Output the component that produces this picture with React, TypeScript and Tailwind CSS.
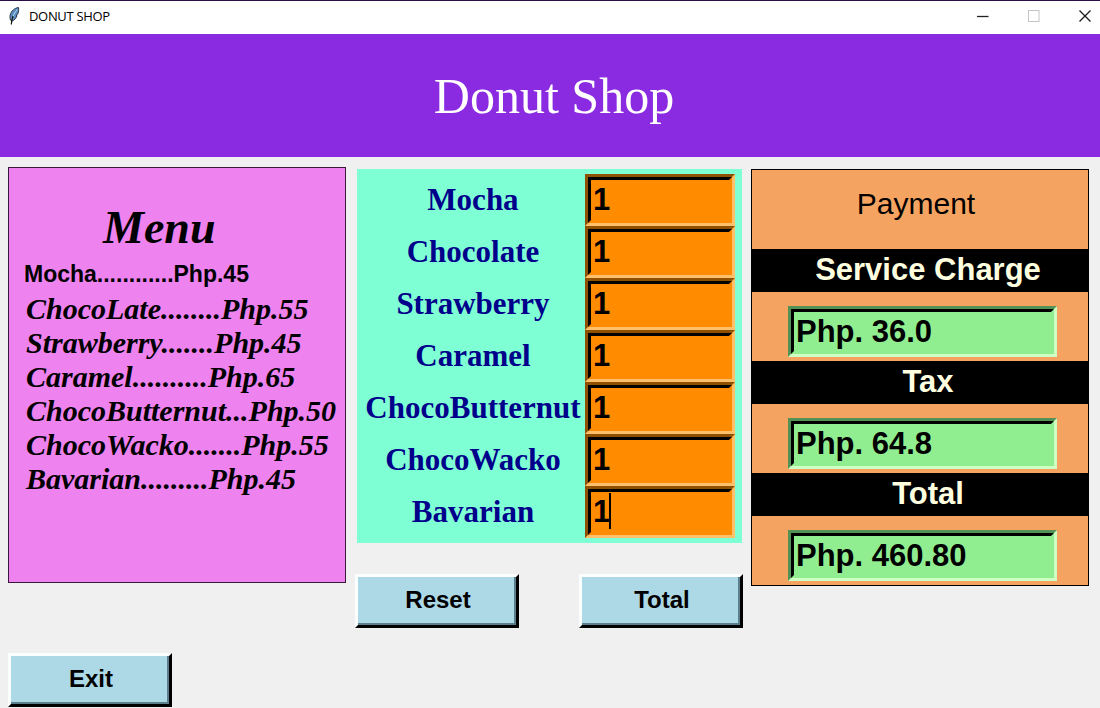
import { useState } from "react";

const menuItems = [
  "ChocoLate........Php.55",
  "Strawberry.......Php.45",
  "Caramel..........Php.65",
  "ChocoButternut...Php.50",
  "ChocoWacko.......Php.55",
  "Bavarian.........Php.45",
];

const donuts = [
  "Mocha",
  "Chocolate",
  "Strawberry",
  "Caramel",
  "ChocoButternut",
  "ChocoWacko",
  "Bavarian",
];

const charges = [
  { name: "Service Charge", value: "Php. 36.0" },
  { name: "Tax", value: "Php. 64.8" },
  { name: "Total", value: "Php. 460.80" },
];

function FeatherIcon() {
  return (
    <svg width="12" height="18" viewBox="0 0 12 18" aria-hidden="true">
      <path
        d="M10.5 .5C7 .8 3 4 2.200 8C1.800 10 2 11.500 2.600 13.200L4 14.200C6.500 13 8.500 11 9 8.500L8.200 8.300L9.800 7C10.600 5 10.900 2.500 10.500 .5Z"
        fill="#5b8cc0"
        stroke="#1d2a3a"
        strokeWidth="0.9"
      />
      <path d="M9.300 2.500C7 5 5 9 3.400 13" fill="none" stroke="#c3dcf2" strokeWidth="0.900" />
      <path d="M5 9C4 11.500 3.500 14 3.300 17.500" fill="none" stroke="#111111" strokeWidth="1.200" />
    </svg>
  );
}

function TitleBar() {
  return (
    <header className="flex h-[34px] items-center border-t border-[#2b0f45] bg-white pb-1 pl-2">
      <FeatherIcon />
      <span className="ml-[9px] font-['Open_Sans',sans-serif] text-[13px] leading-4 tracking-tight text-black">
        DONUT SHOP
      </span>
      <div className="ml-auto flex pr-[3px]">
        <button type="button" aria-label="Minimize" className="flex h-7 w-[51px] items-center justify-center">
          <svg width="12" height="12" viewBox="0 0 12 12">
            <path d="M0 6.500H11.500" stroke="#222222" strokeWidth="1.300" />
          </svg>
        </button>
        <button type="button" aria-label="Maximize" disabled className="flex h-7 w-[51px] items-center justify-center">
          <svg width="12" height="12" viewBox="0 0 12 12">
            <rect x="0.500" y="0.500" width="10.500" height="11" fill="none" stroke="#c4c4c4" />
          </svg>
        </button>
        <button type="button" aria-label="Close" className="flex h-7 w-[38px] items-center justify-end pr-[6px]">
          <svg width="12" height="12" viewBox="0 0 12 12">
            <path d="M.5 .5L11.500 11.500M11.500 .5L.5 11.500" stroke="#1a1a1a" strokeWidth="1.300" />
          </svg>
        </button>
      </div>
    </header>
  );
}

function RaisedButton({ text, onClick }: { text: string; onClick?: () => void }) {
  return (
    <button
      type="button"
      onClick={onClick}
      className="flex h-[54px] w-41 border-[3px] border-t-[#fafffe] border-r-black border-b-black border-l-[#fafffe] bg-[#add8e6] font-['Liberation_Sans',sans-serif] text-[24px] leading-7 font-bold text-black"
    >
      <span className="flex h-full w-full items-center justify-center border-r-2 border-b-2 border-[#5b7f8b] pl-1">
        {text}
      </span>
    </button>
  );
}

export default function App() {
  const [amounts, setAmounts] = useState(donuts.map(() => "1"));

  return (
    <div className="min-h-screen bg-[#f0f0f0] font-['Liberation_Sans',sans-serif] text-black">
      <TitleBar />
      <div className="flex h-[123px] items-center justify-center bg-[#8a2be2] pl-2">
        <h1 className="font-['Liberation_Serif',serif] text-[50px] leading-[56px] text-white">Donut Shop</h1>
      </div>

      <main className="pt-[10px] pr-[11px] pl-2">
        <div className="grid grid-cols-[338fr_389fr_338fr] items-start gap-2">
          <section className="h-[416px] border border-[#3a1a3a] bg-[#ee82ee] pt-8">
            <h2 className="pl-[94px] font-['Liberation_Serif',serif] text-[46px] leading-[56px] font-bold italic">
              Menu
            </h2>
            <ul className="pl-[15px] whitespace-nowrap">
              <li className="text-[23px] leading-[36px] font-bold">Mocha............Php.45</li>
              {menuItems.map((item) => (
                <li
                  key={item}
                  className="pl-0.5 font-['Lucida_Calligraphy','Liberation_Serif',serif] text-[30px] leading-[34px] font-bold italic"
                >
                  {item}
                </li>
              ))}
            </ul>
          </section>

          <section className="pt-0.5 pl-px">
            <div className="mr-px ml-0.5 bg-[#7fffd4] py-[5px] pr-[7px] pl-1">
              {donuts.map((donut, index) => (
                <div key={donut} className="flex h-[52px] items-center">
                  <label
                    htmlFor={donut}
                    className="flex-1 text-center font-['Liberation_Serif',serif] text-[31px] leading-9 font-bold text-[#00008b]"
                  >
                    {donut}
                  </label>
                  <div className="relative h-full w-[150px] border-[3px] border-t-[#8f5000] border-r-[#ffbf6b] border-b-[#ffbf6b] border-l-[#8f5000]">
                    <input
                      id={donut}
                      value={amounts[index]}
                      onChange={(event) =>
                        setAmounts(amounts.map((amount, i) => (i === index ? event.target.value : amount)))
                      }
                      className="block h-full w-full border-[3px] border-t-black border-r-[#ff8c00] border-b-[#ff8c00] border-l-black bg-[#ff8c00] pl-0.5 text-[31px] leading-9 font-bold outline-none"
                    />
                    {index === donuts.length - 1 && (
                      <span className="absolute top-1 left-[21px] h-9 w-0.5 bg-black" />
                    )}
                  </div>
                </div>
              ))}
            </div>
            <div className="mt-[31px] flex justify-between">
              <RaisedButton text="Reset" onClick={() => setAmounts(donuts.map(() => ""))} />
              <RaisedButton text="Total" />
            </div>
          </section>

          <section className="mt-0.5 border border-black bg-[#f4a460]">
            <h2 className="h-[79px] pt-4 pr-2 text-center text-[30px] leading-9">Payment</h2>
            {charges.map(({ name, value }) => (
              <div key={name}>
                <label
                  htmlFor={`charge-${name}`}
                  className="block h-[43px] bg-black pl-4 text-center text-[31px] leading-[42px] font-bold text-[#ffffe0]"
                >
                  {name}
                </label>
                <div className="pt-[14px] pr-[31px] pb-1 pl-9">
                  <div className="h-[51px] border-[3px] border-t-[#549154] border-r-[#d0ffc4] border-b-[#d0ffc4] border-l-[#549154]">
                    <input
                      id={`charge-${name}`}
                      readOnly
                      value={value}
                      className="block h-full w-full border-[3px] border-t-black border-r-[#90ee90] border-b-[#90ee90] border-l-black bg-[#90ee90] pl-0.5 text-[31px] leading-9 font-bold outline-none"
                    />
                  </div>
                </div>
              </div>
            ))}
          </section>
        </div>

        <div className="mt-[25px]">
          <RaisedButton text="Exit" />
        </div>
      </main>
    </div>
  );
}
